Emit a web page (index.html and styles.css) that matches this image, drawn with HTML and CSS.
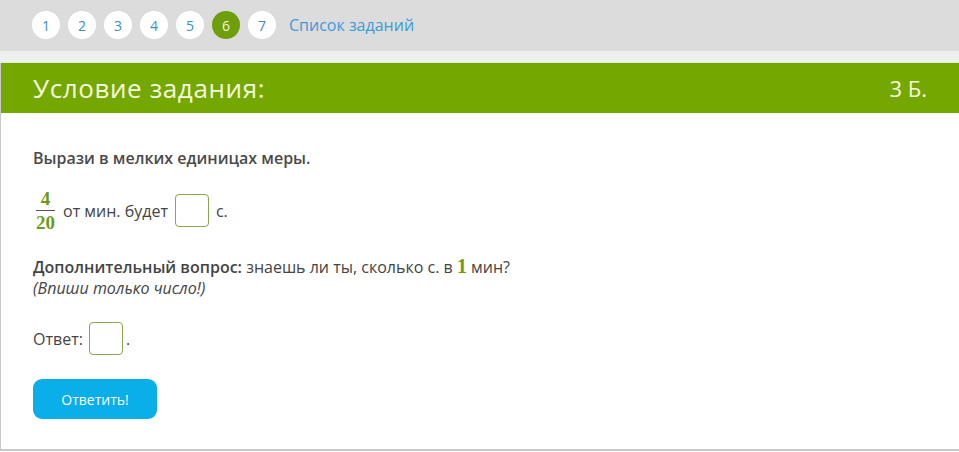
FILE: index.html
```html
<!DOCTYPE html>
<html lang="ru">

<head>
    <meta charset="UTF-8">
    <meta name="viewport" content="width=device-width, initial-scale=1.0">
    <title>Условие задания</title>
    <link rel="stylesheet" href="styles.css">
</head>

<body>

    <div class="topbar">
        <div class="pager">
            <a class="page">1</a>
            <a class="page">2</a>
            <a class="page">3</a>
            <a class="page">4</a>
            <a class="page">5</a>
            <a class="page active">6</a>
            <a class="page">7</a>
            <a class="task-list">Список заданий</a>
        </div>
    </div>
    <div class="strip"></div>

    <div class="task">
        <div class="task-head">
            <h1>Условие задания:</h1>
            <span class="points">3 Б.</span>
        </div>
        <div class="task-body">
            <p class="title">Вырази в мелких единицах меры.</p>

            <div class="line">
                <span class="frac">
                    <span class="num">4</span>
                    <span class="den">20</span>
                </span>
                <span>от мин. будет</span>
                <span class="box"></span>
                <span>с.</span>
            </div>

            <p class="extra"><b>Дополнительный вопрос:</b> знаешь ли ты, сколько с. в <span class="digit">1</span> мин?</p>
            <p class="hint">(Впиши только число!)</p>

            <div class="line answer">
                <span>Ответ:</span>
                <span class="box"></span>
                <span class="dot">.</span>
            </div>

            <button>Ответить!</button>
        </div>
    </div>

</body>

</html>
```

FILE: styles.css
```css
* {
    margin: 0;
    padding: 0;
    box-sizing: border-box;
}

body {
    font-family: "Open Sans", Arial, sans-serif;
    color: #444;
    background-color: #ffffff;
    width: 959px;
    height: 452px;
    overflow: hidden;
}

.topbar {
    background-color: #dcdcdc;
    height: 51px;
    padding: 11px 0 0 32px;
}

.pager {
    display: flex;
    align-items: center;
    gap: 8px;
}

.page {
    width: 28px;
    height: 28px;
    border-radius: 50%;
    background-color: #fff;
    color: #3b8fc7;
    font-size: 14px;
    display: flex;
    align-items: center;
    justify-content: center;
}

.page.active {
    background-color: #6e9e0b;
    color: #f4f8d8;
}

.task-list {
    margin-left: 5px;
    color: #3b9bd8;
    font-size: 16px;
}

.strip {
    height: 12px;
    background-color: #efefef;
    border-bottom: 1px solid #e2ecd0;
}

.task {
    border-left: 1px solid #c8c8c8;
    border-bottom: 2px solid #c8c8c8;
    height: 388px;
}

.task-head {
    background-color: #74a800;
    height: 50px;
    display: flex;
    align-items: center;
    justify-content: space-between;
    padding: 0 32px 0 32px;
    color: #f6f9de;
}

.task-head h1 {
    font-size: 26px;
    font-weight: 400;
    letter-spacing: 0.6px;
}

.points {
    font-size: 22px;
}

.task-body {
    padding: 34px 32px 0 32px;
    font-size: 16px;
    line-height: 22px;
}

.title {
    font-weight: 600;
    color: #4a4a4a;
}

.line {
    display: flex;
    align-items: center;
    gap: 7px;
    margin-top: 19px;
}

.frac {
    display: inline-flex;
    flex-direction: column;
    align-items: center;
    font-family: "Liberation Serif", "DejaVu Serif", serif;
    font-weight: bold;
    color: #6e9a1a;
    font-size: 19px;
    line-height: 21px;
    margin: 0 1px 0 3px;
}

.frac .num {
    border-bottom: 1px solid #555;
    padding: 0 2px 1px 2px;
    width: 100%;
    text-align: center;
}

.frac .den {
    padding-top: 1px;
}

.box {
    display: inline-block;
    width: 34px;
    height: 33px;
    border: 1px solid #8aa650;
    border-radius: 4px;
    background-color: #fff;
}

.extra {
    margin-top: 23px;
    line-height: 21px;
}

.extra b {
    font-weight: 600;
}

.digit {
    font-family: "Liberation Serif", "DejaVu Serif", serif;
    font-weight: bold;
    color: #6e9a1a;
    font-size: 20px;
}

.hint {
    font-style: italic;
    line-height: 21px;
}

.answer {
    margin-top: 23px;
    gap: 6px;
}

.answer .dot {
    margin-left: -3px;
}

button {
    margin-top: 24px;
    width: 124px;
    height: 40px;
    background-color: #0aaee8;
    color: #fff;
    border: none;
    border-radius: 9px;
    font-family: "Open Sans", Arial, sans-serif;
    font-size: 14px;
    cursor: pointer;
}
```
